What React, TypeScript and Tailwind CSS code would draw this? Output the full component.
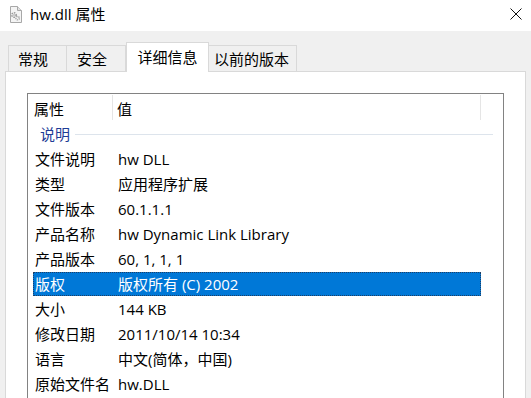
import React from "react";

const rows: [string, string][] = [
  ["文件说明", "hw DLL"],
  ["类型", "应用程序扩展"],
  ["文件版本", "60.1.1.1"],
  ["产品名称", "hw Dynamic Link Library"],
  ["产品版本", "60, 1, 1, 1"],
  ["版权", "版权所有 (C) 2002"],
  ["大小", "144 KB"],
  ["修改日期", "2011/10/14 10:34"],
  ["语言", "中文(简体，中国)"],
  ["原始文件名", "hw.DLL"],
];

const tabs = [
  { label: "常规", cls: "w-[59px] pl-[9px]" },
  { label: "安全", cls: "w-[59px] pl-[10px] border-l-0" },
  { label: "详细信息", cls: "" },
  { label: "以前的版本", cls: "w-[88px] pl-[5px] border-l-0" },
];

const FileIcon = () => (
  <svg width="16" height="17" viewBox="0 0 16 17">
    <path d="M2.5 0.5h7l4 4v12h-11z" fill="#f4f4f4" stroke="#a8a8a8" />
    <path d="M9.5 0.5v4h4" fill="#e2e2e2" stroke="#a8a8a8" />
    <circle cx="6" cy="9" r="2.2" fill="none" stroke="#9a9a9a" strokeWidth="1.6" strokeDasharray="1.4 0.9" />
    <circle cx="6" cy="9" r="0.8" fill="#9a9a9a" />
    <circle cx="9.6" cy="12.2" r="1.7" fill="none" stroke="#a6a6a6" strokeWidth="1.4" strokeDasharray="1.2 0.8" />
  </svg>
);

export default function App() {
  return (
    <div
      className="w-[531px] h-[398px] overflow-hidden bg-[#f0f0f0] flex flex-col text-[15px] text-black"
      style={{ fontFamily: '"Open Sans", "Noto Sans CJK SC", sans-serif' }}
    >
      <div className="h-[31px] bg-white flex items-center shrink-0">
        <div className="ml-[8px] mt-[-3px]">
          <FileIcon />
        </div>
        <span className="ml-[6px] mt-[-2px]">hw.dll 属性</span>
        <div className="ml-auto mr-[9px] mt-[-4px]">
          <svg width="12" height="12" viewBox="0 0 12 12">
            <path d="M0.5 0.5l11 11M11.5 0.5l-11 11" stroke="#111" strokeWidth="1" />
          </svg>
        </div>
      </div>

      <div className="h-[40px] flex items-end pl-[8px] shrink-0">
        {tabs.map((t) =>
          t.label === "详细信息" ? (
            <div
              key={t.label}
              className="relative z-10 -mb-px w-[83px] h-[30px] bg-white border border-b-0 border-[#d9d9d9] flex items-center justify-center"
            >
              {t.label}
            </div>
          ) : (
            <div
              key={t.label}
              className={`h-[26px] border border-b-0 border-[#d9d9d9] flex items-center pt-[2px] ${t.cls}`}
            >
              {t.label}
            </div>
          )
        )}
      </div>

      <div className="ml-[5px] w-[521px] flex-1 bg-white border border-b-0 border-[#d9d9d9] pl-[21px] pt-[21px]">
        <div className="w-[477px] h-full border border-b-0 border-[#828282]">
          <div className="flex h-[27px]">
            <div className="w-[85px] pl-[6px] my-[1px] pt-[3px] border-r border-[#e5e5e5] flex items-center">属性</div>
            <div className="w-[368px] pl-[4px] my-[1px] pt-[3px] border-r border-[#e5e5e5] flex items-center">值</div>
          </div>
          <div className="flex items-center h-[26px] pt-[1px]">
            <span className="ml-[12px] text-[#1e3c96]">说明</span>
            <div className="flex-1 h-px bg-[#dde4ec] ml-[5px] mr-[10px]" />
          </div>
          {rows.map(([k, v]) => {
            const sel = k === "版权";
            return (
              <div key={k} className="h-[25px]">
                <div
                  className={`ml-[5px] w-[448px] h-[24px] flex items-center pt-[1px] ${
                    sel ? "bg-[#0078d7] text-white border border-dotted border-[#1d3f66]" : "border border-transparent"
                  }`}
                >
                  <div className="w-[84px] pl-[1px] whitespace-nowrap">{k}</div>
                  <div className="whitespace-nowrap">{v}</div>
                </div>
              </div>
            );
          })}
        </div>
      </div>
    </div>
  );
}
